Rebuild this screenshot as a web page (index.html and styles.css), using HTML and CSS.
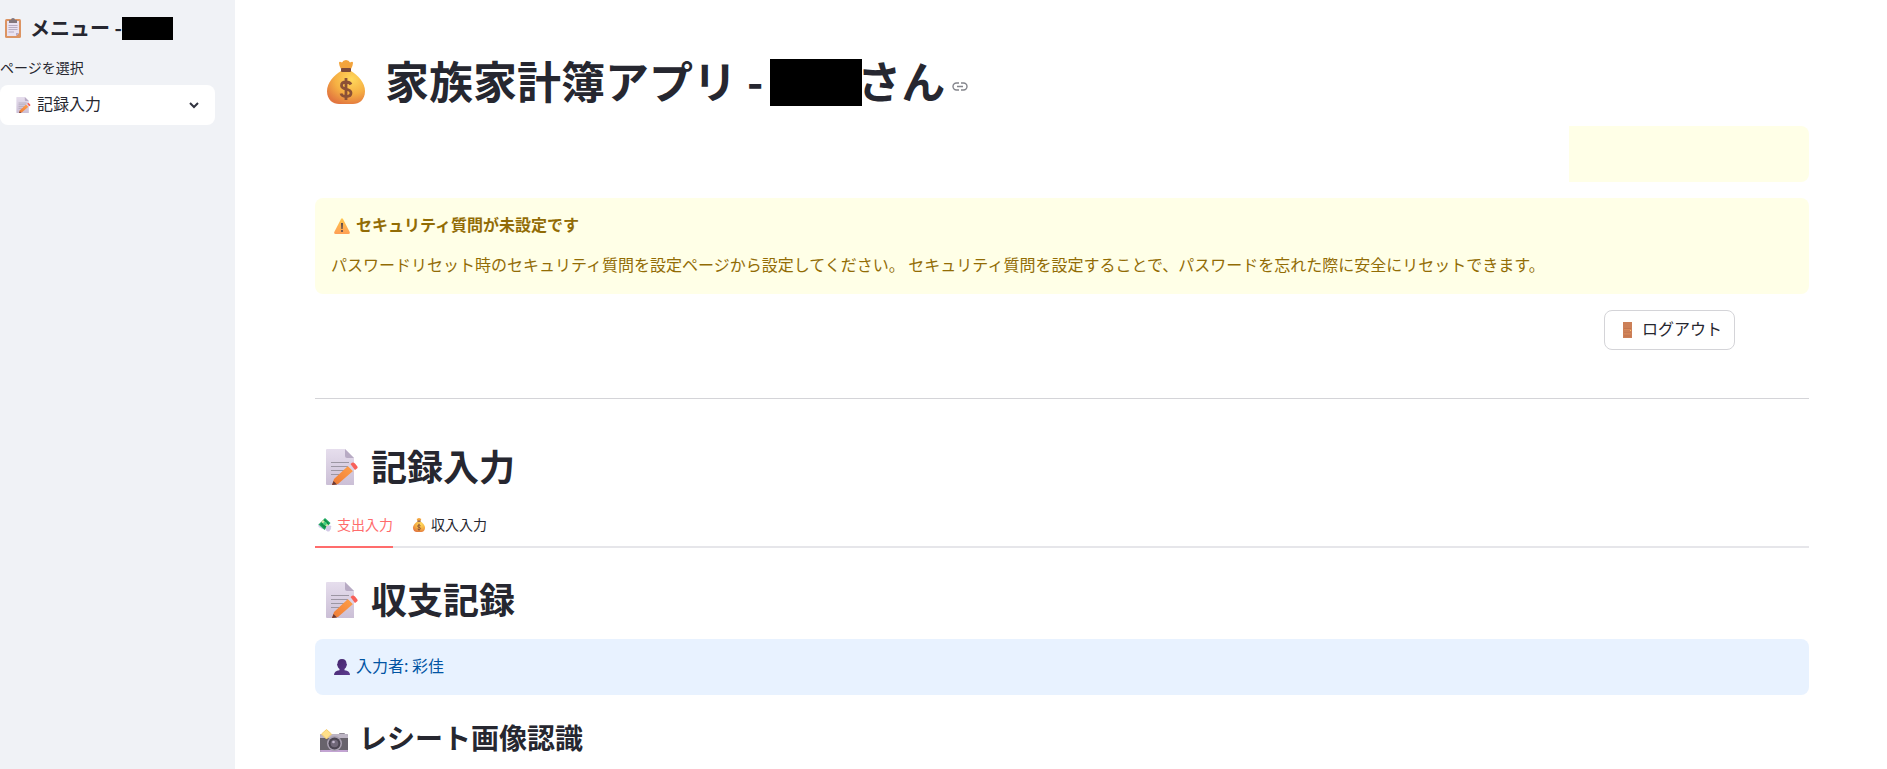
FILE: index.html
```html
<!DOCTYPE html>
<html lang="ja">
<head>
    <meta charset="UTF-8">
    <meta name="viewport" content="width=device-width, initial-scale=1.0">
    <title>家族家計簿アプリ</title>
    <link rel="stylesheet" href="styles.css">
</head>
<body>
    <svg class="sprite" aria-hidden="true">
        <defs>
            <linearGradient id="paper" x1="0" y1="0" x2="0" y2="1">
                <stop offset="0" stop-color="#e6deed"/>
                <stop offset="1" stop-color="#cbbfd6"/>
            </linearGradient>
            <linearGradient id="pencil" x1="1" y1="0" x2="0" y2="1">
                <stop offset="0" stop-color="#ffa04a"/>
                <stop offset="1" stop-color="#ee7a35"/>
            </linearGradient>
            <radialGradient id="gold" cx="0.65" cy="0.25" r="0.8">
                <stop offset="0" stop-color="#ffd95c"/>
                <stop offset="0.55" stop-color="#f6b043"/>
                <stop offset="1" stop-color="#e2763f"/>
            </radialGradient>
            <linearGradient id="amber" x1="0" y1="0" x2="0" y2="1">
                <stop offset="0" stop-color="#ffc64e"/>
                <stop offset="1" stop-color="#ff9f55"/>
            </linearGradient>
            <linearGradient id="purple" x1="0" y1="0" x2="1" y2="1">
                <stop offset="0" stop-color="#43246b"/>
                <stop offset="1" stop-color="#5d3c8f"/>
            </linearGradient>
        </defs>
        <symbol id="memo" viewBox="0 0 32 36">
            <path d="M1 0H19L28 9V36H1Q0 36 0 35V1Q0 0 1 0Z" fill="url(#paper)"/>
            <path d="M19 0L28 9H21Q19 9 19 7Z" fill="#b8abc4"/>
            <path d="M5 13.500H23M5 17.500H22M5 21.500H18M5 25.500H13" stroke="#9c96a3" stroke-width="1.200"/>
            <path d="M6 36L8 30L22 17L27 22L12 35Z" fill="url(#pencil)"/>
            <path d="M6 36L7.500 32L11 35.500Z" fill="#6b3a35"/>
            <path d="M22 17L24.500 15L29 20L27 22Z" fill="#dcd3e6"/>
            <path d="M24.500 15L26 13.700Q27.500 13 29 14.500L31 17Q32.300 18.500 31 19.500L29 21Z" fill="#f8615a"/>
        </symbol>
        <symbol id="bag" viewBox="0 0 38 44">
            <path d="M12 3Q12 1 15 2.500Q16 0 19 0T23 2.500Q26 1 26 3Q26 5 24 9H14Q12 5 12 3Z" fill="#f3a43c"/>
            <path d="M14 11C7 15 0 23 0 31C0 40 6 44 12 44H26C32 44 38 40 38 31C38 23 31 15 24 11Z" fill="url(#gold)"/>
            <rect x="14" y="8" width="10" height="4" rx="1" fill="#7d4a38"/>
            <path d="M24 24.500C23 22.500 21 22 19 22C16.500 22 14.500 23.200 14.500 25.500C14.500 30.500 24 27.800 24 33C24 35.500 21.800 36.500 19 36.500C16.500 36.500 14.500 35.500 14 33.500M19 18V40" fill="none" stroke="#8b5136" stroke-width="2.800"/>
        </symbol>
        <symbol id="clipboard" viewBox="0 0 16 20">
            <rect y="1" width="16" height="19" rx="1.500" fill="#dc9463"/>
            <path d="M2 3H14V15L11 18H2Z" fill="#e9e2f1"/>
            <path d="M14 15H11V18Z" fill="#b5a8c5"/>
            <path d="M3.500 7.500H12.500M3.500 9.500H12.500M3.500 11.500H12.500M3.500 14H9" stroke="#a9a0b6" stroke-width="0.800"/>
            <path d="M4 2H6Q6 0 8 0T10 2H12V5H4Z" fill="#82777d"/>
        </symbol>
        <symbol id="warning" viewBox="0 0 16 16">
            <path d="M7 1Q8 -0.500 9 1L15.700 14Q16.200 16 14.500 16H1.500Q-0.200 16 0.300 14Z" fill="url(#amber)"/>
            <path d="M7 5H9L8.600 11H7.400Z" fill="#5c4a4e"/>
            <circle cx="8" cy="13" r="1.100" fill="#5c4a4e"/>
        </symbol>
        <symbol id="door" viewBox="0 0 9 16">
            <rect width="9" height="16" fill="#cc8058"/>
            <path d="M1 6.500H8M1 11H8M1 14H8" stroke="#bd6e49" stroke-width="0.700"/>
            <path d="M1 7.400H8M1 11.700H8" stroke="#e0935f" stroke-width="0.600"/>
            <rect x="7" y="8" width="1" height="1" fill="#ffc56b"/>
        </symbol>
        <symbol id="money" viewBox="0 0 14 14">
            <path d="M2 6Q-1 5 0.500 8Q0 10 3 10Q4 12 6 10Z" fill="#d9d2ed"/>
            <path d="M7 0L12.500 5L6.500 12L0.500 6.500Z" fill="#1faa5f"/>
            <path d="M7 1.500L11 5L6.500 10.500L2.500 6.500Z" fill="#0f8c4a"/>
            <path d="M3 3.800L5 2L10.500 7.200L9 9Z" fill="#d4e5a8"/>
            <circle cx="7" cy="5.500" r="1.800" fill="#45d07c"/>
            <path d="M8 9Q9 7 12 7.500Q14.500 8.500 12.500 10Q14 11 12 12Q12 14 9.500 13.500L7.500 12Z" fill="#d2c9e6"/>
        </symbol>
        <symbol id="person" viewBox="0 0 16 16">
            <path d="M8 0C11 0 12.500 2 12.500 4.500Q13.500 5 12.500 7Q12 9 10.500 10V11.200Q16 12 16 16H0Q0 12 5.500 11.200V10Q4 9 3.500 7Q2.500 5 3.500 4.500C3.500 2 5 0 8 0Z" fill="url(#purple)"/>
        </symbol>
        <symbol id="camera" viewBox="0 0 28 23">
            <rect x="19" y="4" width="6" height="3" rx="1" fill="#8d8792"/>
            <rect y="5" width="28" height="18" rx="1.500" fill="#68636c"/>
            <path d="M0 9V6.500Q0 5 1.500 5H26.500Q28 5 28 6.500V9Z" fill="#bdb5c4"/>
            <path d="M0 21H28Q28 23 26.500 23H1.500Q0 23 0 21Z" fill="#c3a4d3"/>
            <circle cx="14.500" cy="14.500" r="7.500" fill="#aaa1b2"/>
            <circle cx="14.500" cy="14.500" r="6" fill="#4c4653"/>
            <circle cx="14.500" cy="14.500" r="3.800" fill="#716879"/>
            <circle cx="13.500" cy="13" r="1.300" fill="#c5b9d0"/>
            <path d="M6.500 0.500L11.500 5L6.500 10L1.500 5Z" fill="#ffe08a" stroke="#f6cf70" stroke-linejoin="round"/>
        </symbol>
    </svg>

    <div class="app">
        <aside class="sidebar">
            <h2 class="menu-title">
                <svg class="icon icon-clipboard" aria-hidden="true"><use href="#clipboard"/></svg>
                <span>メニュー -</span>
                <span class="mask mask-small"></span>
            </h2>
            <label class="menu-label" for="page">ページを選択</label>
            <div class="select-box">
                <svg class="icon icon-memo-small" aria-hidden="true"><use href="#memo"/></svg>
                <select id="page">
                    <option>記録入力</option>
                </select>
                <svg class="chevron" viewBox="0 0 10 7" aria-hidden="true"><path d="M1 1L5 5L9 1" fill="none" stroke="#31333f" stroke-width="2"/></svg>
            </div>
        </aside>

        <main class="main">
            <h1 class="title">
                <svg class="icon icon-bag" aria-hidden="true"><use href="#bag"/></svg>
                <span class="text">家族家計簿アプリ -</span>
                <span class="mask mask-large"></span>
                <span class="text honorific">さん</span>
                <a class="anchor" href="#" aria-label="見出しへのリンク">
                    <svg viewBox="0 0 16 10" aria-hidden="true"><path d="M7 1H4.500A3.500 3.500 0 0 0 4.500 8H7M9 1H11.500A3.500 3.500 0 0 1 11.500 8H9M5 4.500H11" fill="none" stroke="#84858c" stroke-width="1.400"/></svg>
                </a>
            </h1>

            <div class="notice"></div>

            <div class="alert warning">
                <p class="alert-head">
                    <svg class="icon icon-text" aria-hidden="true"><use href="#warning"/></svg>
                    <strong>セキュリティ質問が未設定です</strong>
                </p>
                <p>パスワードリセット時のセキュリティ質問を設定ページから設定してください。 セキュリティ質問を設定することで、パスワードを忘れた際に安全にリセットできます。</p>
            </div>

            <div class="actions">
                <button type="button" class="logout">
                    <svg class="icon icon-door" aria-hidden="true"><use href="#door"/></svg>ログアウト
                </button>
            </div>

            <hr class="divider">

            <h2 class="section-title">
                <svg class="icon icon-memo" aria-hidden="true"><use href="#memo"/></svg>
                <span class="text">記録入力</span>
            </h2>

            <div class="tabs" role="tablist">
                <button type="button" class="tab active" role="tab" aria-selected="true">
                    <svg class="icon icon-tab" aria-hidden="true"><use href="#money"/></svg>支出入力
                </button>
                <button type="button" class="tab" role="tab" aria-selected="false">
                    <svg class="icon icon-tab" aria-hidden="true"><use href="#bag"/></svg>収入入力
                </button>
            </div>

            <h2 class="section-title record-title">
                <svg class="icon icon-memo" aria-hidden="true"><use href="#memo"/></svg>
                <span class="text">収支記録</span>
            </h2>

            <div class="alert info">
                <p class="alert-head">
                    <svg class="icon icon-text" aria-hidden="true"><use href="#person"/></svg>
                    <span>入力者: 彩佳</span>
                </p>
            </div>

            <h3 class="sub-title">
                <svg class="icon icon-camera" aria-hidden="true"><use href="#camera"/></svg>
                <span class="text">レシート画像認識</span>
            </h3>
        </main>
    </div>
</body>
</html>
```
FILE: styles.css
```css
*{
    margin: 0;
    padding: 0;
    box-sizing: border-box;
}
body{
    font-family: "Noto Sans CJK JP", "Noto Sans", sans-serif;
    font-size: 16px;
    line-height: 24px;
    color: #262730;
    background-color: white;
    overflow: hidden;
}
button, select{
    font: inherit;
    color: inherit;
}
.sprite{
    position: absolute;
    width: 0;
    height: 0;
}
.icon{
    flex: none;
}
.mask{
    flex: none;
    background-color: black;
}
.text{
    padding-bottom: 4px;
}
.app{
    display: flex;
    min-height: 100vh;
}

/* sidebar */
.sidebar{
    flex: none;
    width: 235px;
    padding: 16px 20px 0 0;
    background-color: #f0f2f6;
}
.menu-title{
    display: flex;
    align-items: center;
    font-size: 20px;
    line-height: 24px;
}
.icon-clipboard{
    width: 16px;
    height: 20px;
    margin: 0 9px 0 5px;
}
.mask-small{
    width: 51px;
    height: 23px;
}
.menu-label{
    display: block;
    margin-top: 15px;
    margin-bottom: 6px;
    font-size: 14px;
}
.select-box{
    display: flex;
    align-items: center;
    height: 40px;
    padding: 0 16px;
    border-radius: 8px;
    background-color: white;
}
.icon-memo-small{
    width: 15px;
    height: 16px;
}
.select-box select{
    flex: 1;
    min-width: 0;
    margin-left: 6px;
    padding-bottom: 4px;
    border: none;
    outline: none;
    appearance: none;
    background: transparent;
}
.chevron{
    flex: none;
    width: 10px;
    height: 7px;
}

/* main */
.main{
    flex: 1;
    min-width: 0;
    padding: 54px 78px 0 80px;
}
.title{
    display: flex;
    align-items: center;
    font-size: 44px;
    line-height: 52px;
}
.icon-bag{
    width: 38px;
    height: 44px;
    margin: 0 20px 0 12px;
}
.mask-large{
    z-index: 1;
    width: 92px;
    height: 47px;
    margin-left: 7px;
}
.honorific{
    margin-left: -5px;
}
.anchor{
    display: flex;
    margin: 10px 0 0 7px;
}
.anchor svg{
    width: 16px;
    height: 10px;
}
.notice{
    width: 240px;
    height: 56px;
    margin: 16px 0 16px auto;
    border-radius: 0 8px 8px 0;
    background-color: #ffffe7;
}
.alert{
    display: flex;
    flex-direction: column;
    gap: 16px;
    padding: 14px 16px 18px;
    border-radius: 8px;
}
.warning{
    color: #926c05;
    background-color: #ffffe7;
}
.info{
    color: #0054a3;
    background-color: #e8f2ff;
}
.alert-head{
    display: flex;
    align-items: center;
}
.icon-text{
    width: 16px;
    height: 16px;
    margin: 4px 6px 0 3px;
}
.actions{
    display: flex;
    justify-content: flex-end;
    padding: 16px 74px 0 0;
}
.logout{
    display: flex;
    align-items: center;
    height: 40px;
    padding: 0 12px 4px;
    border: 1px solid #d4d4d8;
    border-radius: 8px;
    background-color: white;
}
.icon-door{
    width: 9px;
    height: 16px;
    margin: 4px 10px 0 6px;
}
.divider{
    height: 1px;
    margin: 48px 0 44px;
    border: none;
    background-color: #d4d4d8;
}
.section-title{
    display: flex;
    align-items: center;
    font-size: 36px;
    line-height: 44px;
}
.icon-memo{
    width: 32px;
    height: 36px;
    margin: 0 13px 0 11px;
}
.tabs{
    display: flex;
    gap: 16px;
    height: 42px;
    margin-top: 15px;
    box-shadow: inset 0 -2px #e6e6ea;
}
.tab{
    display: flex;
    align-items: center;
    padding-bottom: 4px;
    border: none;
    border-bottom: 2px solid transparent;
    background: transparent;
    font-size: 14px;
}
.tab.active{
    color: #ff6c6c;
    border-bottom-color: #ff6c6c;
}
.icon-tab{
    width: 14px;
    height: 14px;
    margin: 2px 5px 0 3px;
}
.record-title{
    margin: 28px 0 15px;
}
.sub-title{
    display: flex;
    align-items: center;
    margin-top: 25px;
    font-size: 28px;
    line-height: 34px;
}
.icon-camera{
    width: 28px;
    height: 23px;
    margin: 2px 11px 0 5px;
}
```
